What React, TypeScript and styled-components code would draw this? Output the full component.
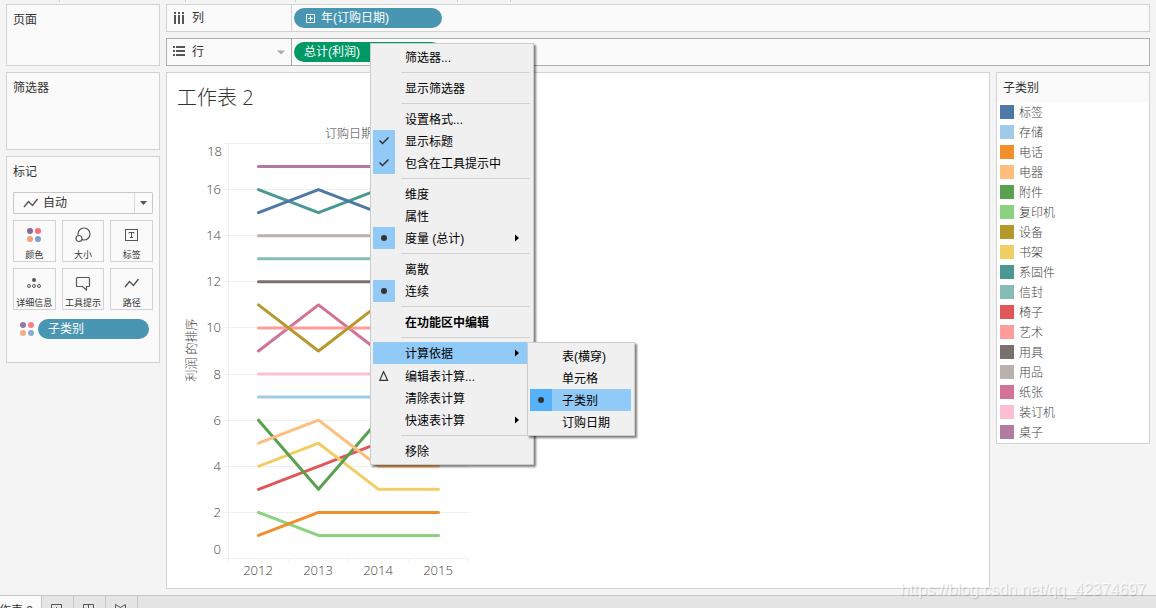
import React from 'react';
import styled, { createGlobalStyle, css } from 'styled-components';

const SANS = '"Open Sans", "Noto Sans CJK SC", sans-serif';
const UI = '"Liberation Sans", "Noto Sans CJK SC", sans-serif';

const GlobalStyle = createGlobalStyle`
  *, *::before, *::after { box-sizing: border-box; }
  body { margin: 0; background: #f4f4f4; font: 12px/16px ${UI}; color: #333; }
  button, select { font: inherit; color: inherit; }
  h1, h2, ul, li { margin: 0; padding: 0; list-style: none; font-weight: normal; }
`;

const Page = styled.div`
  position: relative;
  display: flex;
  flex-direction: column;
  height: 100vh;
  overflow: hidden;
`;

const ToolbarEdge = styled.div`
  display: flex;
  flex: none;
  height: 2px;
  margin-bottom: 2px;
`;

const ToolbarSlot = styled.span<{ $width: number }>`
  width: ${(p) => p.$width}px;
  border-right: 1px solid #cfcfcf;
`;

const Workspace = styled.div`
  flex: 1;
  min-height: 0;
  display: grid;
  grid-template-columns: 154px minmax(0, 1fr);
  gap: 6px;
  padding: 0 6px 6px;
`;

const Column = styled.div`
  display: flex;
  flex-direction: column;
  gap: 6px;
  min-height: 0;
`;

const Card = styled.section<{ $height?: number }>`
  flex: none;
  min-height: ${(p) => (p.$height ? `${p.$height}px` : '0')};
  padding: 7px 6px;
  border: 1px solid #d2d2d2;
  background: #fafafa;
`;

const CardTitle = styled.h2`
  font-size: 12px;
  line-height: 16px;
`;

const MarkType = styled.label`
  position: relative;
  display: block;
  height: 22px;
  margin-top: 12px;

  svg { position: absolute; pointer-events: none; }
  svg:first-of-type { left: 10px; top: 6px; }
  svg:last-of-type { right: 0; top: 1px; }
`;

const MarkSelect = styled.select`
  appearance: none;
  width: 100%;
  height: 22px;
  padding: 0 24px 0 29px;
  border: 1px solid #c8c8c8;
  border-radius: 1px;
  background: #fafafa;
  line-height: 20px;
`;

const MarkGrid = styled.div`
  display: grid;
  grid-template-columns: repeat(3, 1fr);
  gap: 6px;
  margin-top: 6px;
`;

const MarkButton = styled.button`
  display: flex;
  flex-direction: column;
  align-items: center;
  height: 42px;
  padding: 5px 0 0;
  border: 1px solid #d2d2d2;
  background: #fafafa;
  font-size: 9px;
  line-height: 12px;
  white-space: nowrap;

  svg { flex: none; margin-bottom: 5px; }
`;

const MarkAssignment = styled.div`
  display: flex;
  align-items: center;
  gap: 4px;
  margin: 9px 4px 16px 7px;
`;

const Pill = styled.button<{ $color: string; $width?: number }>`
  display: flex;
  align-items: center;
  gap: 5px;
  height: 20px;
  width: ${(p) => (p.$width ? `${p.$width}px` : 'auto')};
  flex: ${(p) => (p.$width ? 'none' : '1')};
  padding: 0 10px;
  border: 0;
  border-radius: 10px;
  background: ${(p) => p.$color};
  color: #fff;
`;

const Shelf = styled.section<{ $active?: boolean }>`
  display: flex;
  flex: none;
  height: 28px;
  border: 1px solid ${(p) => (p.$active ? '#b0b0b0' : '#d2d2d2')};
  background: #fafafa;
`;

const ShelfHeader = styled.div<{ $active?: boolean }>`
  display: flex;
  align-items: center;
  gap: 7px;
  width: 125px;
  padding: 0 6px;
  border-right: 1px solid ${(p) => (p.$active ? '#b0b0b0' : '#d2d2d2')};

  svg:last-child:not(:first-child) { margin-left: auto; }
`;

const ShelfItems = styled.div`
  position: relative;
  display: flex;
  align-items: center;
  flex: 1;
  padding-left: 2px;
`;

const Canvas = styled.div`
  display: grid;
  grid-template-columns: minmax(0, 1fr) 154px;
  gap: 6px;
  align-items: start;
  flex: 1;
  min-height: 0;
`;

const View = styled.main`
  height: 100%;
  overflow: hidden;
  border: 1px solid #d2d2d2;
  background: #fff;
`;

const SheetTitle = styled.h1`
  padding: 11px 10px 0;
  font: 300 20px/28px ${SANS};
  color: #333;
`;

const Chart = styled.svg`
  display: block;
  font: 300 13px ${SANS};
  fill: #444;
`;

const LegendCard = styled.section`
  padding-bottom: 1px;
  border: 1px solid #d2d2d2;
  background: #fff;
`;

const LegendTitle = styled.h2`
  padding: 7px 6px 6px;
  background: #fafafa;
  font-size: 12px;
  line-height: 16px;
`;

const LegendItem = styled.li`
  display: flex;
  align-items: center;
  gap: 5px;
  height: 20px;
  padding-left: 3px;
  font-weight: 300;
  color: #444;
`;

const LegendLabel = styled.span`
  padding-top: 2px;
`;

const Swatch = styled.span<{ $color: string }>`
  width: 14px;
  height: 14px;
  background: ${(p) => p.$color};
`;

const menuPanel = css`
  position: absolute;
  z-index: 2;
  border: 1px solid #ccc;
  background: #f0f0f0;
  box-shadow: 2px 2px 2px rgba(0, 0, 0, 0.5);
  color: #000;
`;

const ContextMenu = styled.ul`
  ${menuPanel}
  left: 78px;
  top: 4px;
  width: 164px;
  padding: 2px;
`;

const SubMenu = styled.ul`
  ${menuPanel}
  left: calc(100% - 4px);
  top: 0;
  width: 108px;
  padding: 2px 3px 2px 2px;
`;

const MenuRow = styled.li`
  position: relative;
`;

const MenuButton = styled.button<{ $selected?: boolean; $strong?: boolean; $tall?: boolean }>`
  display: flex;
  align-items: center;
  width: 100%;
  height: ${(p) => (p.$tall ? 23 : 22)}px;
  padding: 0 12px 0 0;
  border: 0;
  background: ${(p) => (p.$selected ? '#91c9f7' : 'transparent')};
  font-weight: ${(p) => (p.$strong ? 700 : 400)};
  text-align: left;
  white-space: nowrap;
`;

const MenuMark = styled.span<{ $fill?: string }>`
  display: grid;
  place-items: center;
  flex: none;
  width: 22px;
  height: 100%;
  margin-right: 10px;
  background: ${(p) => p.$fill || 'transparent'};
`;

const MenuLabel = styled.span`
  flex: 1;
  padding-top: 2px;
`;

const MenuSeparator = styled.li`
  height: 1px;
  margin: 4px 1px 4px 28px;
  background: #d0d0d0;
`;

const TabBar = styled.nav`
  display: flex;
  flex: none;
  height: 13px;
  overflow: hidden;
  border-top: 1px solid #c6c6c6;
  background: #e5e5e5;
`;

const Tab = styled.button<{ $current?: boolean }>`
  display: flex;
  align-items: center;
  justify-content: ${(p) => (p.$current ? 'flex-end' : 'flex-start')};
  flex: none;
  width: ${(p) => (p.$current ? 42 : 32)}px;
  height: 30px;
  padding: ${(p) => (p.$current ? '0 8px 0 0' : '0 0 0 9px')};
  border: 0;
  border-right: 1px solid #c6c6c6;
  background: ${(p) => (p.$current ? '#fafafa' : '#e5e5e5')};
  white-space: nowrap;
`;

const Watermark = styled.div`
  position: absolute;
  right: 10px;
  bottom: 9px;
  font-size: 16px;
  line-height: 18px;
  color: rgba(255, 255, 255, 0.75);
  text-shadow: 1px 1px 1px rgba(0, 0, 0, 0.18);
  pointer-events: none;
`;

type Series = { name: string; color: string; ranks: number[] };

const series: Series[] = [
  { name: '标签', color: '#4e79a7', ranks: [15, 16, 15, 15] },
  { name: '存储', color: '#a0cbe8', ranks: [7, 7, 7, 7] },
  { name: '电话', color: '#f28e2b', ranks: [1, 2, 2, 2] },
  { name: '电器', color: '#ffbe7d', ranks: [5, 6, 4, 4] },
  { name: '附件', color: '#59a14f', ranks: [6, 3, 6, 6] },
  { name: '复印机', color: '#8cd17d', ranks: [2, 1, 1, 1] },
  { name: '设备', color: '#b6992d', ranks: [11, 9, 11, 11] },
  { name: '书架', color: '#f1ce63', ranks: [4, 5, 3, 3] },
  { name: '系固件', color: '#499894', ranks: [16, 15, 16, 16] },
  { name: '信封', color: '#86bcb6', ranks: [13, 13, 13, 13] },
  { name: '椅子', color: '#e15759', ranks: [3, 4, 5, 5] },
  { name: '艺术', color: '#ff9d9a', ranks: [10, 10, 10, 10] },
  { name: '用具', color: '#79706e', ranks: [12, 12, 12, 12] },
  { name: '用品', color: '#bab0ac', ranks: [14, 14, 14, 14] },
  { name: '纸张', color: '#d37295', ranks: [9, 11, 9, 9] },
  { name: '装订机', color: '#fabfd2', ranks: [8, 8, 8, 8] },
  { name: '桌子', color: '#b07aa1', ranks: [17, 17, 17, 17] },
];

const years = [2012, 2013, 2014, 2015];
const rankTicks = [0, 2, 4, 6, 8, 10, 12, 14, 16, 18];
const BASE = 446.5;
const TOP = 31.5;
const yOf = (rank: number) => BASE - (rank * (BASE - TOP)) / 18;
const gridY = (rank: number) => Math.floor(yOf(rank)) + 0.5;
const xOf = (index: number) => 91.5 + index * 60;

function labelY(rank: number) {
  if (rank === 18) return 44;
  if (rank === 0) return 442;
  return Math.floor(yOf(rank)) + 5;
}

function RankChart() {
  return (
    <Chart width="320" height="476" role="img" aria-label="利润 的排序">
      <text x="182" y="26" fontSize="12" textAnchor="middle">订购日期</text>
      <text transform="translate(29 238) rotate(-90)" fontSize="12" textAnchor="middle">利润 的排序</text>
      <g stroke="#f0f0f0">
        {rankTicks.map((r) => <line key={r} x1="56" x2="302" y1={gridY(r)} y2={gridY(r)} />)}
        <line x1="61.5" x2="61.5" y1={TOP} y2={BASE} />
        {[0, 1, 2, 3, 4].map((i) => (
          <line key={i} x1={61.5 + i * 60} x2={61.5 + i * 60} y1={BASE} y2={BASE + 4} />
        ))}
      </g>
      {rankTicks.map((r) => (
        <text key={r} x={r === 18 ? 55 : 54} y={labelY(r)} textAnchor="end">{r}</text>
      ))}
      {years.map((year, i) => (
        <text key={year} x={91 + i * 60} y="463" textAnchor="middle">{year}</text>
      ))}
      <g fill="none" strokeWidth="3" strokeLinecap="round" strokeLinejoin="round">
        {[...series].reverse().map((s) => (
          <polyline key={s.name} stroke={s.color} points={s.ranks.map((r, i) => `${xOf(i)},${yOf(r)}`).join(' ')} />
        ))}
      </g>
    </Chart>
  );
}

const ColorDots = ({ faded = false, size = 18 }: { faded?: boolean; size?: number }) => (
  <svg width={size} height="18" viewBox={size === 14 ? '2 0 14 18' : '0 0 18 18'} opacity={faded ? 0.88 : 1}>
    <circle cx="5" cy="5" r="3" fill="#856a94" />
    <circle cx="13" cy="5" r="3" fill="#fa6e80" />
    <circle cx="5" cy="13" r="3" fill="#f5a273" />
    <circle cx="13" cy="13" r="3" fill="#7ba0cd" />
  </svg>
);

const SizeIcon = () => (
  <svg width="18" height="18" fill="#fafafa" stroke="#555" strokeWidth="1.2">
    <circle cx="10" cy="8" r="6" />
    <circle cx="5" cy="12.5" r="3" />
  </svg>
);

const LabelIcon = () => (
  <svg width="18" height="18" fill="none" stroke="#555">
    <rect x="2.5" y="3.5" width="12" height="11" />
    <path d="M6 7.500V6.500H11V7.500M8.500 6.500V11.500M7 11.500H10" />
  </svg>
);

const DetailIcon = () => (
  <svg width="18" height="18" fill="none" stroke="#555">
    <circle cx="9" cy="6" r="2" fill="#555" stroke="none" />
    <circle cx="4" cy="12" r="1.5" />
    <circle cx="9" cy="12" r="1.5" />
    <circle cx="14" cy="12" r="1.5" />
  </svg>
);

const TooltipIcon = () => (
  <svg width="18" height="18" fill="none" stroke="#555" strokeWidth="1.2">
    <path d="M3.500 3.500H14.500Q15.500 3.500 15.500 4.500V11.500Q15.500 12.500 14.500 12.500H12.500V16L8.500 12.500H3.500Q2.500 12.500 2.500 11.500V4.500Q2.500 3.500 3.500 3.500Z" />
  </svg>
);

const PathIcon = ({ height = 18 }: { height?: number }) => (
  <svg width="16" height={height} viewBox={height === 18 ? '0 -4 16 18' : '0 0 16 10'} fill="none" stroke="#555" strokeWidth="1.4">
    <path d="M1 9L5.500 3.500L9.500 7.500L14.500 1" />
  </svg>
);

const SelectCaret = () => (
  <svg width="19" height="20">
    <path d="M0.500 0V20" stroke="#d8d8d8" />
    <path d="M6 8H13L9.500 12Z" fill="#555" />
  </svg>
);

const ColumnsIcon = () => (
  <svg width="12" height="12" fill="#555">
    {[1, 5, 9].map((x) => (
      <g key={x}>
        <rect x={x} y="0" width="2" height="2" />
        <rect x={x} y="3" width="2" height="9" />
      </g>
    ))}
  </svg>
);

const RowsIcon = () => (
  <svg width="12" height="12" fill="#555">
    {[0, 4, 8].map((y) => (
      <g key={y}>
        <rect x="0" y={y} width="2" height="2" />
        <rect x="3" y={y} width="9" height="2" />
      </g>
    ))}
  </svg>
);

const ShelfCaret = () => (
  <svg width="8" height="5"><path d="M0 0.500H8L4 4.500Z" fill="#aaa" /></svg>
);

const ExpandIcon = () => (
  <svg width="12" height="11" fill="none" stroke="#fff">
    <path d="M2.500 1.500H10.500V9.500H2.500ZM4 5.500H9M6.500 3V8" />
  </svg>
);

const Check = () => (
  <svg width="12" height="10" fill="none" stroke="#333" strokeWidth="1.5"><path d="M1.500 4.500L4.500 7.500L10.500 1.500" /></svg>
);

const Dot = () => (
  <svg width="6" height="6"><circle cx="3" cy="3" r="3" fill="#333" /></svg>
);

const Delta = () => (
  <svg width="10" height="10" fill="none" stroke="#333" strokeWidth="1.2"><path d="M4.500 0.600L8.600 9.300H0.800Z" /></svg>
);

const SubArrow = () => (
  <svg width="4" height="8"><path d="M0 0.500L4 4L0 7.500Z" fill="#000" /></svg>
);

type ItemProps = {
  label: string;
  mark?: React.ReactNode;
  fill?: string;
  selected?: boolean;
  strong?: boolean;
  tall?: boolean;
  arrow?: boolean;
  children?: React.ReactNode;
};

function MenuItem({ label, mark, fill, selected, strong, tall, arrow, children }: ItemProps) {
  return (
    <MenuRow>
      <MenuButton type="button" $selected={selected} $strong={strong} $tall={tall}>
        <MenuMark $fill={fill}>{mark}</MenuMark>
        <MenuLabel>{label}</MenuLabel>
        {arrow && <SubArrow />}
      </MenuButton>
      {children}
    </MenuRow>
  );
}

function FieldMenu() {
  return (
    <ContextMenu>
      <MenuItem label="筛选器..." />
      <MenuSeparator />
      <MenuItem label="显示筛选器" />
      <MenuSeparator />
      <MenuItem label="设置格式..." />
      <MenuItem label="显示标题" mark={<Check />} fill="#91c9f7" />
      <MenuItem label="包含在工具提示中" mark={<Check />} fill="#91c9f7" />
      <MenuSeparator />
      <MenuItem label="维度" />
      <MenuItem label="属性" />
      <MenuItem label="度量 (总计)" mark={<Dot />} fill="#91c9f7" arrow />
      <MenuSeparator />
      <MenuItem label="离散" />
      <MenuItem label="连续" mark={<Dot />} fill="#91c9f7" />
      <MenuSeparator />
      <MenuItem label="在功能区中编辑" strong />
      <MenuSeparator />
      <MenuItem label="计算依据" selected arrow>
        <SubMenu>
          <MenuItem label="表(横穿)" />
          <MenuItem label="单元格" />
          <MenuItem label="子类别" mark={<Dot />} fill="#56b0fa" selected />
          <MenuItem label="订购日期" />
        </SubMenu>
      </MenuItem>
      <MenuItem label="编辑表计算..." mark={<Delta />} tall />
      <MenuItem label="清除表计算" />
      <MenuItem label="快速表计算" arrow />
      <MenuSeparator />
      <MenuItem label="移除" />
    </ContextMenu>
  );
}

export default function App() {
  return (
    <Page>
      <GlobalStyle />
      <ToolbarEdge>
        <ToolbarSlot $width={60} />
        <ToolbarSlot $width={126} />
        <ToolbarSlot $width={110} />
        <ToolbarSlot $width={162} />
        <ToolbarSlot $width={53} />
      </ToolbarEdge>
      <Workspace>
        <Column>
          <Card $height={62}><CardTitle>页面</CardTitle></Card>
          <Card $height={78}><CardTitle>筛选器</CardTitle></Card>
          <Card>
            <CardTitle>标记</CardTitle>
            <MarkType>
              <PathIcon height={10} />
              <MarkSelect aria-label="标记"><option>自动</option></MarkSelect>
              <SelectCaret />
            </MarkType>
            <MarkGrid>
              <MarkButton type="button"><ColorDots />颜色</MarkButton>
              <MarkButton type="button"><SizeIcon />大小</MarkButton>
              <MarkButton type="button"><LabelIcon />标签</MarkButton>
              <MarkButton type="button"><DetailIcon />详细信息</MarkButton>
              <MarkButton type="button"><TooltipIcon />工具提示</MarkButton>
              <MarkButton type="button"><PathIcon />路径</MarkButton>
            </MarkGrid>
            <MarkAssignment>
              <ColorDots faded size={14} />
              <Pill type="button" $color="#4996b2">子类别</Pill>
            </MarkAssignment>
          </Card>
        </Column>
        <Column>
          <Shelf>
            <ShelfHeader><ColumnsIcon />列</ShelfHeader>
            <ShelfItems>
              <Pill type="button" $color="#4996b2" $width={148}><ExpandIcon />年(订购日期)</Pill>
            </ShelfItems>
          </Shelf>
          <Shelf $active>
            <ShelfHeader $active><RowsIcon />行<ShelfCaret /></ShelfHeader>
            <ShelfItems>
              <Pill type="button" $color="#009966" $width={148}>总计(利润)</Pill>
              <FieldMenu />
            </ShelfItems>
          </Shelf>
          <Canvas>
            <View>
              <SheetTitle>工作表 2</SheetTitle>
              <RankChart />
            </View>
            <LegendCard>
              <LegendTitle>子类别</LegendTitle>
              <ul>
                {series.map((s) => (
                  <LegendItem key={s.name}>
                    <Swatch $color={s.color} />
                    <LegendLabel>{s.name}</LegendLabel>
                  </LegendItem>
                ))}
              </ul>
            </LegendCard>
          </Canvas>
        </Column>
      </Workspace>
      <TabBar>
        <Tab type="button" $current>工作表 2</Tab>
        <Tab type="button" aria-label="新建工作表">
          <svg width="12" height="14" fill="none" stroke="#555"><path d="M0.500 0.500H10.500V12.500H0.500ZM5.500 3V9M3 6.500H8" /></svg>
        </Tab>
        <Tab type="button" aria-label="新建仪表板">
          <svg width="12" height="14" fill="none" stroke="#555"><path d="M0.500 0.500H10.500V12.500H0.500ZM5.500 0.500V12.500M0.500 6.500H10.500" /></svg>
        </Tab>
        <Tab type="button" aria-label="新建故事">
          <svg width="12" height="14" fill="none" stroke="#555"><path d="M0.500 0.500L5.500 3.500L10.500 0.500V11.500L5.500 13.500L0.500 11.500ZM5.500 3.500V13.500" /></svg>
        </Tab>
      </TabBar>
      <Watermark>https://blog.csdn.net/qq_42374697</Watermark>
    </Page>
  );
}
